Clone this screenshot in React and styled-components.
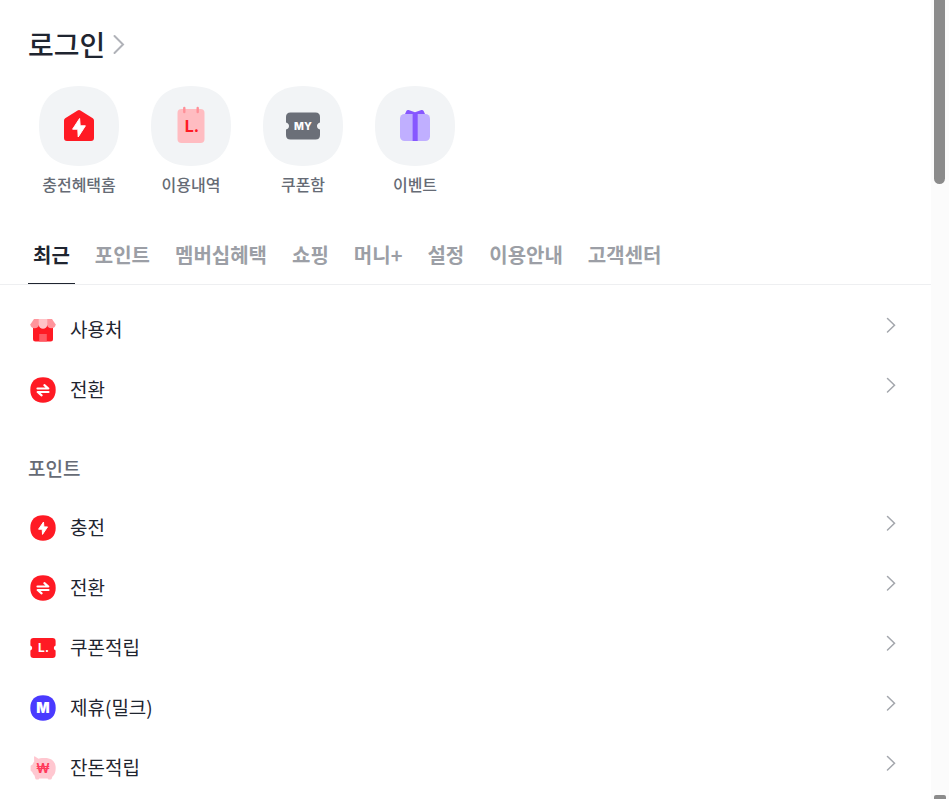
import React from 'react';
import styled, { createGlobalStyle } from 'styled-components';

const GlobalStyles = createGlobalStyle`
    * {
        box-sizing: border-box;
        margin: 0;
        padding: 0;
    }
    body {
        background-color: #fff;
        color: #1f2530;
        font-family: "Noto Sans CJK KR", sans-serif;
        word-break: keep-all;
    }
    ul {
        list-style: none;
    }
    a {
        color: inherit;
        text-decoration: none;
    }
    svg {
        display: block;
        flex-shrink: 0;
    }
`;

const PageStyles = styled.div`
    display: flex;
    align-items: flex-start;
    height: 100vh;
    overflow: hidden;
`;

const MenuStyles = styled.main`
    flex: 1;
    min-width: 0;
    padding-top: 25px;
`;

const LoginLink = styled.a`
    display: flex;
    align-items: center;
    gap: 8px;
    width: fit-content;
    margin-left: 28px;
    h1 {
        font-size: 28px;
        font-weight: 500;
        line-height: 38px;
    }
`;

const QuickList = styled.ul`
    display: flex;
    flex-wrap: wrap;
    gap: 32px;
    padding: 23px 39px 0;
`;

const QuickLink = styled.a`
    display: flex;
    flex-direction: column;
    align-items: center;
    gap: 7px;
    width: 80px;
    color: #666b75;
    font-size: 16px;
    font-weight: 500;
    line-height: 22px;
    white-space: nowrap;
`;

const TabBar = styled.nav`
    display: flex;
    gap: 15px;
    margin-top: 31px;
    padding: 0 28px;
    border-bottom: 1px solid #eeeff1;
`;

const Tab = styled.a`
    padding: 0 5px;
    border-bottom: 1px solid ${(props) => (props.$active ? '#1f2530' : 'transparent')};
    color: ${(props) => (props.$active ? '#1f2530' : '#9c9fa6')};
    font-size: 20px;
    font-weight: 700;
    line-height: 57px;
    white-space: nowrap;
`;

const Section = styled.section`
    padding: 15px 28px 20px;
    h2 {
        margin-bottom: 17px;
        color: #666b75;
        font-size: 19px;
        font-weight: 500;
        line-height: 26px;
    }
`;

const RowLink = styled.a`
    display: flex;
    align-items: flex-start;
    gap: 12px;
    padding: 15px 0;
    font-size: 19px;
    line-height: 28px;
    span {
        flex: 1;
    }
`;

const IconText = styled.text`
    font-family: Inter, sans-serif;
    font-weight: ${(props) => props.$weight || 800};
    text-anchor: middle;
`;

const ScrollTrack = styled.div`
    display: flex;
    flex-direction: column;
    align-items: center;
    justify-content: space-between;
    width: 18px;
    height: 100vh;
    padding-right: 1px;
    background-color: #fbfbfb;
`;

const ScrollThumb = styled.div`
    width: 11px;
    height: 23vh;
    border-radius: 0 0 6px 6px;
    background-color: #8b8b8b;
`;

const ScrollEnd = styled.div`
    width: 12px;
    height: 4px;
    border-radius: 2px 2px 0 0;
    background-color: #8b8b8b;
`;

function Chevron({ large }) {
    if (large) {
        return (
            <svg width="14" height="24" viewBox="0 0 14 24" fill="none" aria-hidden="true">
                <path d="M1.5 4 10 12.5 1.5 21" stroke="#b0b2b8" strokeWidth="2" strokeLinecap="round" />
            </svg>
        );
    }
    return (
        <svg width="20" height="20" viewBox="0 0 20 20" fill="none" aria-hidden="true">
            <path d="M4.5 3.5 11.5 10.2 4.5 17" stroke="#a4a7ad" strokeWidth="1.5" strokeLinecap="round" />
        </svg>
    );
}

function Tile({ children }) {
    return (
        <svg width="80" height="80" viewBox="0 0 80 80" aria-hidden="true">
            <path d="M40 0C66 0 80 14 80 40S66 80 40 80 0 66 0 40 14 0 40 0Z" fill="#f2f4f6" />
            {children}
        </svg>
    );
}

function HomeIcon() {
    return (
        <Tile>
            <path d="M38.6 24.5Q40 23.6 41.4 24.5L53.8 32.3Q55 33.1 55 34.6V52Q55 55 52 55H28Q25 55 25 52V34.6Q25 33.1 26.2 32.3Z" fill="#ff1a24" />
            <path d="M40.6 32.5 33.6 43.2H38.8L39.2 51 46.4 39.8H41.2Z" fill="#fff" stroke="#fff" strokeLinejoin="round" />
        </Tile>
    );
}

function CalendarIcon() {
    return (
        <Tile>
            <rect x="26.5" y="23" width="27" height="34" rx="4" fill="#ffbcc1" />
            <path d="M33.3 22V26M46.7 22V26" stroke="#ff8f97" strokeWidth="2.4" strokeLinecap="round" />
            <IconText x="41" y="46" fontSize="16" fill="#ff1a24" $weight={700}>L.</IconText>
        </Tile>
    );
}

function CouponIcon() {
    return (
        <Tile>
            <path d="M27.5 26.5H52.5Q57 26.5 57 31V36.5Q54 37.5 54 40T57 43.5V49Q57 53.5 52.5 53.5H27.5Q23 53.5 23 49V43.5Q26 42.5 26 40T23 36.5V31Q23 26.5 27.5 26.5Z" fill="#6b6f78" />
            <IconText x="40" y="43.8" fontSize="10.5" fill="#fff">MY</IconText>
        </Tile>
    );
}

function GiftIcon() {
    return (
        <Tile>
            <rect x="25" y="28" width="30" height="27" rx="4.5" fill="#c0afff" />
            <path d="M30 28 31.5 24.8Q32.2 23.6 33.6 24L40 26.2 46.4 24Q47.8 23.6 48.500 24.8L50 28Z" fill="#8757ff" />
            <path d="M37 28H43V55H37Z" fill="#aa8eff" />
            <path d="M38 27H42.5V55H38Z" fill="#8757ff" />
        </Tile>
    );
}

function RoundIcon({ color, children }) {
    return (
        <svg width="30" height="30" viewBox="0 0 30 30" aria-hidden="true">
            <path d="M15 2.3C23 2.3 27.700 7 27.700 15S23 27.700 15 27.700 2.300 23 2.300 15 7 2.300 15 2.300Z" fill={color} />
            {children}
        </svg>
    );
}

function StoreIcon() {
    return (
        <svg width="30" height="30" viewBox="0 0 30 30" aria-hidden="true">
            <path d="M5 10H25V24Q25 26.500 22.500 26.500H7.500Q5 26.500 5 24Z" fill="#ff1a24" />
            <path d="M11.200 19H18.800V26.500H11.200Z" fill="#ff5a64" />
            <path d="M6 4H11V9.500A4.400 4.400 0 0 1 2.300 9.500Z" fill="#ff959c" />
            <path d="M24 4H19V9.500A4.400 4.400 0 0 0 27.700 9.500Z" fill="#ff959c" />
            <path d="M10.700 4H19.300V9.500A4.300 4.300 0 0 1 10.700 9.500Z" fill="#ffc4c8" />
        </svg>
    );
}

function SwapIcon() {
    return (
        <RoundIcon color="#ff1a24">
            <path d="M9.500 13.500H20.300L16.400 10.200M20.500 17H9.700L13.600 20.300" fill="none" stroke="#fff" strokeWidth="2.200" strokeLinecap="round" strokeLinejoin="round" />
        </RoundIcon>
    );
}

function BoltIcon() {
    return (
        <RoundIcon color="#ff1a24">
            <path d="M15.500 9 10.600 16.200H14.200L14.500 21.400 19.500 13.900H15.900Z" fill="#fff" stroke="#fff" strokeLinejoin="round" />
        </RoundIcon>
    );
}

function TicketIcon() {
    return (
        <svg width="30" height="30" viewBox="0 0 30 30" aria-hidden="true">
            <path d="M5.500 5H24.500Q27.600 5 27.600 8V12.500Q25.800 13.200 25.800 15T27.600 17.500V22Q27.600 25 24.500 25H5.500Q2.400 25 2.400 22V17.500Q4.200 16.800 4.200 15T2.400 12.500V8Q2.400 5 5.500 5Z" fill="#ff1a24" />
            <IconText x="15.500" y="19.300" fontSize="12" fill="#fff" $weight={700}>L.</IconText>
        </svg>
    );
}

function MilkIcon() {
    return (
        <RoundIcon color="#4a3aff">
            <IconText x="15" y="20" fontSize="14" fill="#fff" $weight={900}>M</IconText>
        </RoundIcon>
    );
}

function PigIcon() {
    return (
        <svg width="30" height="30" viewBox="0 0 30 30" aria-hidden="true">
            <path d="M6 3.800Q6.300 3 7 3.500L10.500 5.800Q12 5 14 5H17C24 5 27.700 9 27.700 15 27.700 19.500 26.500 22 24.300 23.800L23.800 25.500Q23.500 26.400 22.500 26.400H20.800Q20 26.400 19.700 25.400H11.300Q11 26.400 10.200 26.400H8.500Q7.600 26.400 7.300 25.500L6.500 22.600Q5.200 21.300 4.300 19.200L2.600 17.500V12.800L4.500 11.500Q5 9.900 6.200 8.700Z" fill="#ffc7d0" />
            <IconText x="15" y="19.500" fontSize="13" fill="#ff3b5c" $weight={700}>₩</IconText>
        </svg>
    );
}

const quickMenus = [
    { title: '충전혜택홈', icon: <HomeIcon /> },
    { title: '이용내역', icon: <CalendarIcon /> },
    { title: '쿠폰함', icon: <CouponIcon /> },
    { title: '이벤트', icon: <GiftIcon /> },
];

const tabs = ['최근', '포인트', '멤버십혜택', '쇼핑', '머니+', '설정', '이용안내', '고객센터'];

const recentMenus = [
    { title: '사용처', icon: <StoreIcon /> },
    { title: '전환', icon: <SwapIcon /> },
];

const pointMenus = [
    { title: '충전', icon: <BoltIcon /> },
    { title: '전환', icon: <SwapIcon /> },
    { title: '쿠폰적립', icon: <TicketIcon /> },
    { title: '제휴(밀크)', icon: <MilkIcon /> },
    { title: '잔돈적립', icon: <PigIcon /> },
];

function MenuSection({ heading, items }) {
    return (
        <Section>
            {heading && <h2>{heading}</h2>}
            <ul>
                {items.map((item) => (
                    <li key={item.title}>
                        <RowLink href="#">
                            {item.icon}
                            <span>{item.title}</span>
                            <Chevron />
                        </RowLink>
                    </li>
                ))}
            </ul>
        </Section>
    );
}

export default function App() {
    return (
        <>
            <GlobalStyles />
            <PageStyles>
                <MenuStyles>
                    <LoginLink href="#">
                        <h1>로그인</h1>
                        <Chevron large />
                    </LoginLink>
                    <QuickList>
                        {quickMenus.map((item) => (
                            <li key={item.title}>
                                <QuickLink href="#">
                                    {item.icon}
                                    {item.title}
                                </QuickLink>
                            </li>
                        ))}
                    </QuickList>
                    <TabBar>
                        {tabs.map((tab, i) => (
                            <Tab key={tab} href="#" $active={i === 0}>{tab}</Tab>
                        ))}
                    </TabBar>
                    <MenuSection items={recentMenus} />
                    <MenuSection heading="포인트" items={pointMenus} />
                </MenuStyles>
                <ScrollTrack>
                    <ScrollThumb />
                    <ScrollEnd />
                </ScrollTrack>
            </PageStyles>
        </>
    );
}
